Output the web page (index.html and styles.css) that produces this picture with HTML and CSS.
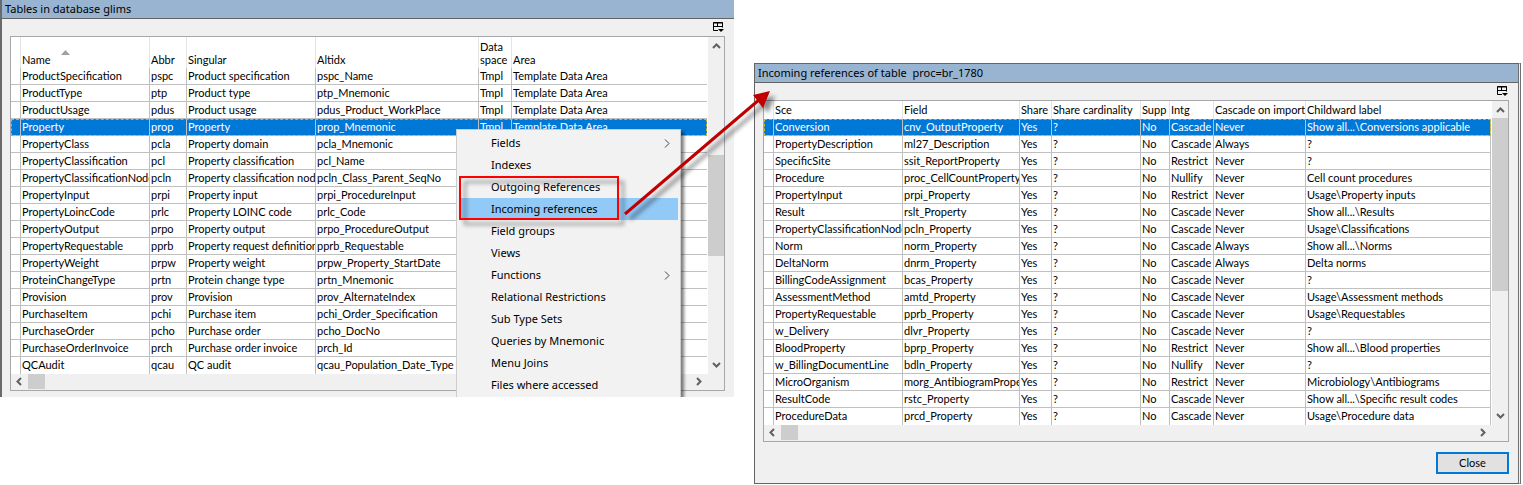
FILE: index.html
```html
<!DOCTYPE html>
<html lang="en">
<head>
<meta charset="utf-8">
<title>Tables in database glims</title>
<link rel="stylesheet" href="styles.css">
</head>
<body>
<main class="stage">
<section class="window tables-window">
<h1 class="titlebar">Tables in database glims</h1>
<div class="toolbar"><button class="tool" aria-label="Choose columns"><svg width="11" height="10" viewBox="0 0 11 10"><path d="M5 8.500H.5V.5h9v5M0 1h10M.5 4.500h9M4.500 .5v4" fill="none" stroke="#000"/><path d="M5 7h6L8 10z"/></svg></button></div>
<div class="grid">
<div class="grid-main">
<table class="data tall">
<colgroup><col class="w10"><col class="w129"><col class="w37"><col class="w129"><col class="w163"><col class="w33"><col></colgroup>
<thead><tr><th></th><th><span class="sorted">Name<svg width="9" height="5" viewBox="0 0 9 5"><path d="M0 5L4.500 0L9 5z" fill="#a0a0a0"/></svg></span></th><th>Abbr</th><th>Singular</th><th>Altidx</th><th>Data<br>space</th><th>Area</th></tr></thead>
<tbody>
<tr><td></td><td>ProductSpecification</td><td>pspc</td><td>Product specification</td><td>pspc_Name</td><td>Tmpl</td><td>Template Data Area</td></tr>
<tr><td></td><td>ProductType</td><td>ptp</td><td>Product type</td><td>ptp_Mnemonic</td><td>Tmpl</td><td>Template Data Area</td></tr>
<tr><td></td><td>ProductUsage</td><td>pdus</td><td>Product usage</td><td>pdus_Product_WorkPlace</td><td>Tmpl</td><td>Template Data Area</td></tr>
<tr class="selected"><td></td><td>Property</td><td>prop</td><td>Property</td><td>prop_Mnemonic</td><td>Tmpl</td><td>Template Data Area</td></tr>
<tr><td></td><td>PropertyClass</td><td>pcla</td><td>Property domain</td><td>pcla_Mnemonic</td><td></td><td></td></tr>
<tr><td></td><td>PropertyClassification</td><td>pcl</td><td>Property classification</td><td>pcl_Name</td><td></td><td></td></tr>
<tr><td></td><td>PropertyClassificationNode</td><td>pcln</td><td>Property classification node</td><td>pcln_Class_Parent_SeqNo</td><td></td><td></td></tr>
<tr><td></td><td>PropertyInput</td><td>prpi</td><td>Property input</td><td>prpi_ProcedureInput</td><td></td><td></td></tr>
<tr><td></td><td>PropertyLoincCode</td><td>prlc</td><td>Property LOINC code</td><td>prlc_Code</td><td></td><td></td></tr>
<tr><td></td><td>PropertyOutput</td><td>prpo</td><td>Property output</td><td>prpo_ProcedureOutput</td><td></td><td></td></tr>
<tr><td></td><td>PropertyRequestable</td><td>pprb</td><td>Property request definition</td><td>pprb_Requestable</td><td></td><td></td></tr>
<tr><td></td><td>PropertyWeight</td><td>prpw</td><td>Property weight</td><td>prpw_Property_StartDate</td><td></td><td></td></tr>
<tr><td></td><td>ProteinChangeType</td><td>prtn</td><td>Protein change type</td><td>prtn_Mnemonic</td><td></td><td></td></tr>
<tr><td></td><td>Provision</td><td>prov</td><td>Provision</td><td>prov_AlternateIndex</td><td></td><td></td></tr>
<tr><td></td><td>PurchaseItem</td><td>pchi</td><td>Purchase item</td><td>pchi_Order_Specification</td><td></td><td></td></tr>
<tr><td></td><td>PurchaseOrder</td><td>pcho</td><td>Purchase order</td><td>pcho_DocNo</td><td></td><td></td></tr>
<tr><td></td><td>PurchaseOrderInvoice</td><td>prch</td><td>Purchase order invoice</td><td>prch_Id</td><td></td><td></td></tr>
<tr><td></td><td>QCAudit</td><td>qcau</td><td>QC audit</td><td>qcau_Population_Date_Type</td><td></td><td></td></tr>
</tbody>
</table>
<div class="vscroll"><svg class="chev" width="9" height="6" viewBox="0 0 9 6"><path d="M1 5L4.500 1.500L8 5"/></svg><div class="track low"><div class="thumb"></div></div><svg class="chev" width="9" height="6" viewBox="0 0 9 6"><path d="M1 1L4.500 4.500L8 1"/></svg></div>
</div>
<div class="hscroll"><svg class="chev" width="6" height="9" viewBox="0 0 6 9"><path d="M5 1L1.500 4.500L5 8"/></svg><div class="hthumb"></div><svg class="chev end" width="6" height="9" viewBox="0 0 6 9"><path d="M1 1L4.500 4.500L1 8"/></svg></div>
</div>
<ul class="menu">
<li><button>Fields<svg width="6" height="9" viewBox="0 0 6 9"><path d="M1 .5L5 4.500L1 8.500"/></svg></button></li>
<li><button>Indexes</button></li>
<li><button>Outgoing References</button></li>
<li><button class="hot">Incoming references</button></li>
<li><button>Field groups</button></li>
<li><button>Views</button></li>
<li><button>Functions<svg width="6" height="9" viewBox="0 0 6 9"><path d="M1 .5L5 4.500L1 8.500"/></svg></button></li>
<li><button>Relational Restrictions</button></li>
<li><button>Sub Type Sets</button></li>
<li><button>Queries by Mnemonic</button></li>
<li><button>Menu Joins</button></li>
<li><button>Files where accessed</button></li>
</ul>
</section>
<section class="window refs-window">
<h2 class="titlebar">Incoming references of table&nbsp; proc=br_1780</h2>
<div class="toolbar"><button class="tool" aria-label="Choose columns"><svg width="11" height="10" viewBox="0 0 11 10"><path d="M5 8.500H.5V.5h9v5M0 1h10M.5 4.500h9M4.500 .5v4" fill="none" stroke="#000"/><path d="M5 7h6L8 10z"/></svg></button></div>
<div class="grid">
<div class="grid-main">
<table class="data">
<colgroup><col class="w10"><col class="w129"><col class="w117"><col class="w32"><col class="w89"><col class="w29"><col class="w44"><col class="w92"><col></colgroup>
<thead><tr><th></th><th>Sce</th><th>Field</th><th>Share</th><th>Share cardinality</th><th>Supp</th><th>Intg</th><th>Cascade on import</th><th>Childward label</th></tr></thead>
<tbody>
<tr class="selected"><td></td><td>Conversion</td><td>cnv_OutputProperty</td><td>Yes</td><td>?</td><td>No</td><td>Cascade</td><td>Never</td><td>Show all...\Conversions applicable</td></tr>
<tr><td></td><td>PropertyDescription</td><td>ml27_Description</td><td>Yes</td><td>?</td><td>No</td><td>Cascade</td><td>Always</td><td>?</td></tr>
<tr><td></td><td>SpecificSite</td><td>ssit_ReportProperty</td><td>Yes</td><td>?</td><td>No</td><td>Restrict</td><td>Never</td><td>?</td></tr>
<tr><td></td><td>Procedure</td><td>proc_CellCountProperty</td><td>Yes</td><td>?</td><td>No</td><td>Nullify</td><td>Never</td><td>Cell count procedures</td></tr>
<tr><td></td><td>PropertyInput</td><td>prpi_Property</td><td>Yes</td><td>?</td><td>No</td><td>Restrict</td><td>Never</td><td>Usage\Property inputs</td></tr>
<tr><td></td><td>Result</td><td>rslt_Property</td><td>Yes</td><td>?</td><td>No</td><td>Cascade</td><td>Never</td><td>Show all...\Results</td></tr>
<tr><td></td><td>PropertyClassificationNode</td><td>pcln_Property</td><td>Yes</td><td>?</td><td>No</td><td>Cascade</td><td>Never</td><td>Usage\Classifications</td></tr>
<tr><td></td><td>Norm</td><td>norm_Property</td><td>Yes</td><td>?</td><td>No</td><td>Cascade</td><td>Always</td><td>Show all...\Norms</td></tr>
<tr><td></td><td>DeltaNorm</td><td>dnrm_Property</td><td>Yes</td><td>?</td><td>No</td><td>Cascade</td><td>Always</td><td>Delta norms</td></tr>
<tr><td></td><td>BillingCodeAssignment</td><td>bcas_Property</td><td>Yes</td><td>?</td><td>No</td><td>Cascade</td><td>Never</td><td>?</td></tr>
<tr><td></td><td>AssessmentMethod</td><td>amtd_Property</td><td>Yes</td><td>?</td><td>No</td><td>Cascade</td><td>Never</td><td>Usage\Assessment methods</td></tr>
<tr><td></td><td>PropertyRequestable</td><td>pprb_Property</td><td>Yes</td><td>?</td><td>No</td><td>Cascade</td><td>Never</td><td>Usage\Requestables</td></tr>
<tr><td></td><td>w_Delivery</td><td>dlvr_Property</td><td>Yes</td><td>?</td><td>No</td><td>Cascade</td><td>Never</td><td>?</td></tr>
<tr><td></td><td>BloodProperty</td><td>bprp_Property</td><td>Yes</td><td>?</td><td>No</td><td>Restrict</td><td>Never</td><td>Show all...\Blood properties</td></tr>
<tr><td></td><td>w_BillingDocumentLine</td><td>bdln_Property</td><td>Yes</td><td>?</td><td>No</td><td>Nullify</td><td>Never</td><td>?</td></tr>
<tr><td></td><td>MicroOrganism</td><td>morg_AntibiogramProperty</td><td>Yes</td><td>?</td><td>No</td><td>Restrict</td><td>Never</td><td>Microbiology\Antibiograms</td></tr>
<tr><td></td><td>ResultCode</td><td>rstc_Property</td><td>Yes</td><td>?</td><td>No</td><td>Cascade</td><td>Never</td><td>Show all...\Specific result codes</td></tr>
<tr><td></td><td>ProcedureData</td><td>prcd_Property</td><td>Yes</td><td>?</td><td>No</td><td>Cascade</td><td>Never</td><td>Usage\Procedure data</td></tr>
</tbody>
</table>
<div class="vscroll"><svg class="chev" width="9" height="6" viewBox="0 0 9 6"><path d="M1 5L4.500 1.500L8 5"/></svg><div class="track"><div class="thumb long"></div></div><svg class="chev" width="9" height="6" viewBox="0 0 9 6"><path d="M1 1L4.500 4.500L8 1"/></svg></div>
</div>
<div class="hscroll"><svg class="chev" width="6" height="9" viewBox="0 0 6 9"><path d="M5 1L1.500 4.500L5 8"/></svg><div class="hthumb"></div><svg class="chev end" width="6" height="9" viewBox="0 0 6 9"><path d="M1 1L4.500 4.500L1 8"/></svg></div>
</div>
<div class="actions"><button class="close">Close</button></div>
</section>
<svg class="callout" width="790" height="240" viewBox="0 0 790 240" aria-hidden="true">
<g class="shadowed"><rect x="460" y="177" width="158" height="42" fill="none" stroke="#f00" stroke-width="2"/></g>
<g class="shadowed"><path d="M625 214L760 99" stroke="#c00000" stroke-width="3" fill="none"/><path d="M770 91L753 95L763 108z" fill="#c00000"/></g>
</svg>
</main>
</body>
</html>
```
FILE: styles.css
```css
* { box-sizing: border-box; }
body { margin: 0; background: #fff; color: #000; font: 11px/16px Lato, "Liberation Sans", sans-serif; }
button { font: inherit; color: inherit; border: 0; margin: 0; }
svg { display: block; flex: none; }

.stage { position: relative; display: grid; grid-template-columns: 734fr 767fr; align-items: start; gap: 20px; padding-right: 2px; }
.window { position: relative; min-width: 0; background: #f0f0f0; }
.tables-window { border-left: 2px solid #6a6a6a; padding-bottom: 6px; overflow: hidden; }
.refs-window { margin-top: 63px; border: 1px solid #646464; border-right: 3px double #707070; }

.titlebar { margin: 0; height: 19px; padding: 0 3px; background: #99b4d1; border-bottom: 1px solid #646464; font: 11px/18px "Noto Sans", "Open Sans", sans-serif; white-space: nowrap; }
.toolbar { display: flex; justify-content: flex-end; padding: 3px 10px 4px; }
.tool { padding: 0; background: none; }

.grid { margin: 0 8px; border: 1px solid #a5a7ad; }
.tables-window .grid { margin-right: 9px; }
.refs-window .grid { margin-right: 9px; }
.grid-main { display: flex; }
.data { flex: 1; min-width: 0; width: 0; table-layout: fixed; border-collapse: separate; border-spacing: 0; background: #fff; }
.data th, .data td { padding: 0 0 0 1px; text-align: left; font-weight: 400; white-space: nowrap; overflow: hidden; border-right: 1px solid #c0c0c0; }
.data th { height: 18px; line-height: 18px; border-right-color: #e5e5e5; }
.data td { height: 17px; line-height: 16px; vertical-align: top; border-bottom: 1px solid #c0c0c0; }
.data.tall th { height: 31px; line-height: 13px; vertical-align: bottom; padding-bottom: 2px; }
.data th:last-child { border-right: 0; }
.tall td:last-child { border-right: 0; }
.data tbody tr:last-child td { border-bottom: 0; }
.selected { outline: 1px dashed #c8b41e; outline-offset: -1px; }
.data .selected td { background: #0078d7; color: #fff; }
.sorted { display: flex; gap: 10px; }
.sorted svg { margin-top: -3px; }

.w10 { width: 10px; } .w29 { width: 29px; } .w32 { width: 32px; } .w33 { width: 33px; } .w37 { width: 37px; }
.w44 { width: 44px; } .w89 { width: 89px; } .w92 { width: 92px; } .w117 { width: 117px; } .w129 { width: 129px; } .w163 { width: 163px; }

.vscroll { width: 17px; display: flex; flex-direction: column; align-items: center; padding: 6px 0; border-left: 1px solid #fff; }
.track { flex: 1; width: 100%; padding-top: 5px; }
.low { padding-top: 106px; }
.thumb { height: 101px; background: #cdcdcd; }
.long { height: 173px; }
.chev { fill: none; stroke: #606060; stroke-width: 2; }
.hscroll { height: 16px; display: flex; align-items: center; padding: 0 22px 1px 5px; gap: 6px; }
.hthumb { width: 17px; height: 15px; background: #cdcdcd; }
.end { margin-left: auto; }

.menu { position: absolute; left: 454px; top: 129px; width: 225px; margin: 0; padding: 2px; list-style: none; background: #f2f2f2; border: 1px solid #ccc; box-shadow: 3px 3px 3px rgba(0,0,0,.5); font: 11px/22px "Noto Sans", "Open Sans", sans-serif; }
.menu button { display: flex; width: 100%; height: 22px; padding: 0 8px 0 32px; background: none; align-items: center; justify-content: space-between; text-align: left; }
.menu .hot { background: #91c9f7; }
.menu svg { fill: none; stroke: #404040; }

.actions { display: flex; justify-content: flex-end; padding: 10px 9px 9px; }
.close { width: 73px; height: 22px; background: #e1e1e1; border: 2px solid #0078d7; padding: 0; }

.callout { position: absolute; left: 0; top: 0; pointer-events: none; }
.shadowed { filter: drop-shadow(5px 5px 2px rgba(0,0,0,.45)); }
```
